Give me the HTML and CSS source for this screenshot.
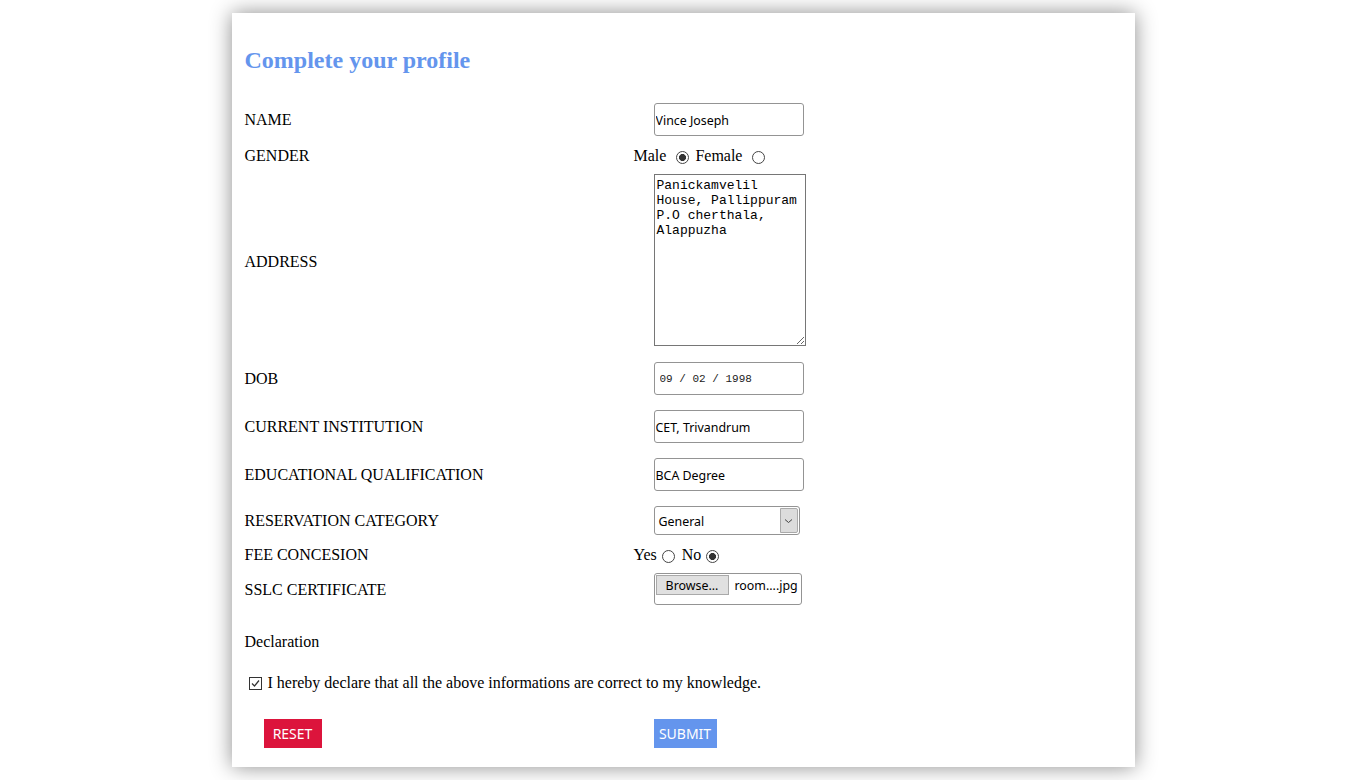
FILE: index.html
```html
<!DOCTYPE html>
<html lang="en">
<head>
<meta charset="utf-8">
<title>Complete your profile</title>
<link rel="stylesheet" href="styles.css">
</head>
<body>
<div class="card">
  <h2 class="title">Complete your profile</h2>
  <form class="form">
    <div class="row">
      <span class="label">NAME</span>
      <div class="value"><input class="text" type="text" value="Vince Joseph"></div>
    </div>
    <div class="row tall">
      <span class="label">GENDER</span>
      <div class="value choice">
        <span>Male</span><input class="radio" type="radio" name="g" checked>
        <span>Female</span><input class="radio" type="radio" name="g">
      </div>
    </div>
    <div class="row">
      <span class="label low">ADDRESS</span>
      <div class="value"><textarea class="area" spellcheck="false">Panickamvelil House, Pallippuram P.O cherthala, Alappuzha</textarea></div>
    </div>
    <div class="row gap16">
      <span class="label">DOB</span>
      <div class="value"><input class="text date" type="text" value="09 / 02 / 1998"></div>
    </div>
    <div class="row gap15">
      <span class="label">CURRENT INSTITUTION</span>
      <div class="value"><input class="text" type="text" value="CET, Trivandrum"></div>
    </div>
    <div class="row gap15">
      <span class="label">EDUCATIONAL QUALIFICATION</span>
      <div class="value"><input class="text" type="text" value="BCA Degree"></div>
    </div>
    <div class="row gap15">
      <span class="label">RESERVATION CATEGORY</span>
      <div class="value">
        <div class="select">
          <span class="select-text">General</span>
          <span class="select-btn"><svg width="9" height="6" viewBox="0 0 9 6"><path d="M1 1.5 L4.5 4.5 L8 1.5" fill="none" stroke="#444" stroke-width="1"/></svg></span>
        </div>
      </div>
    </div>
    <div class="row tall">
      <span class="label">FEE CONCESION</span>
      <div class="value choice">
        <span>Yes</span><input class="radio fee" type="radio" name="f">
        <span>No</span><input class="radio fee" type="radio" name="f" checked>
      </div>
    </div>
    <div class="row">
      <span class="label low1">SSLC CERTIFICATE</span>
      <div class="value">
        <div class="file"><span class="browse">Browse...</span><span class="fname">room....jpg</span></div>
      </div>
    </div>
    <p class="decl">Declaration</p>
    <label class="agree">
      <span class="check"><svg width="13" height="13" viewBox="0 0 13 13"><rect x="0.5" y="0.5" width="12" height="12" fill="#fff" stroke="#333"/><path d="M3 6.5 L5.5 9 L10 3.5" fill="none" stroke="#333" stroke-width="1.2"/></svg></span>
      <span>I hereby declare that all the above informations are correct to my knowledge.</span>
    </label>
    <div class="actions">
      <div class="act-left"><button type="reset" class="btn reset">RESET</button></div>
      <div class="act-right"><button type="button" class="btn submit">SUBMIT</button></div>
    </div>
  </form>
</div>
</body>
</html>
```
FILE: styles.css
```css
html, body {
  margin: 0;
  padding: 0;
  background: #fff;
}
body {
  font-family: "Liberation Serif", "Times New Roman", serif;
  font-size: 16px;
  color: #000;
  padding-top: 13px;
  padding-bottom: 13px;
}
.card {
  width: 903px;
  margin: 0 auto;
  box-sizing: border-box;
  padding: 33px 13px 19px 13px;
  background: #fff;
  box-shadow: 0 0 20px rgba(0, 0, 0, 0.45);
}
.title {
  margin: 0 0 29px 0;
  font-size: 24px;
  line-height: 28px;
  font-weight: bold;
  color: #6495ED;
}
.form {
  margin: 0;
}
.row {
  display: flex;
  align-items: center;
}
.row.tall {
  box-sizing: border-box;
  height: 38px;
  padding-top: 2px;
}
.row.gap15 { margin-top: 15px; }
.row.gap16 { margin-top: 16px; }
.label {
  width: 389px;
  flex: none;
  line-height: 18px;
}
.label.low {
  padding-top: 3px;
}
.label.low1 {
  padding-top: 2px;
}
.value {
  display: flex;
  align-items: center;
}
.value > .text,
.value > .area,
.value > .select,
.value > .file {
  margin-left: 20px;
}
.text {
  box-sizing: border-box;
  width: 150px;
  height: 33px;
  padding: 1px 1px 0 1px;
  border: 1px solid #949494;
  border-radius: 3px;
  font-family: "Noto Sans", "Open Sans", sans-serif;
  font-size: 12.4px;
  color: #000;
  background: #fff;
  outline: none;
}
.text.date {
  padding-left: 5px;
  font-family: "Liberation Mono", "DejaVu Sans Mono", monospace;
  font-size: 11px;
  color: #222;
}
.area {
  box-sizing: border-box;
  width: 152px;
  height: 172px;
  padding: 3px 2px;
  border: 1px solid #767676;
  border-radius: 0;
  font-family: "Liberation Mono", "Courier New", monospace;
  font-size: 13px;
  line-height: 15px;
  color: #000;
  resize: both;
  outline: none;
}
.choice {
  font-size: 16px;
  line-height: 18px;
}
.radio {
  appearance: none;
  -webkit-appearance: none;
  box-sizing: border-box;
  width: 13px;
  height: 13px;
  margin: 2px 6px 0 10px;
  border: 1px solid #444;
  border-radius: 50%;
  background: #fff;
}
.radio.fee {
  margin: 2px 7px 0 5px;
}
.radio:checked {
  background: radial-gradient(circle, #333 0, #333 3.2px, #fff 3.8px);
}
.select {
  box-sizing: border-box;
  width: 146px;
  height: 29px;
  display: flex;
  align-items: stretch;
  border: 1px solid #949494;
  border-radius: 3px;
  font-family: "Noto Sans", "Open Sans", sans-serif;
  font-size: 12.4px;
  overflow: hidden;
}
.select-text {
  flex: 1;
  display: flex;
  align-items: center;
  padding-left: 4px;
  padding-top: 1px;
}
.select-btn {
  width: 16px;
  margin: 1px;
  display: flex;
  align-items: center;
  justify-content: center;
  background: #dcdcdc;
  border: 1px solid #aaa;
  border-radius: 0 2px 2px 0;
}
.file {
  box-sizing: border-box;
  width: 148px;
  height: 32px;
  display: flex;
  align-items: flex-start;
  padding: 1px;
  border: 1px solid #949494;
  border-radius: 3px;
  font-family: "Noto Sans", "Open Sans", sans-serif;
  font-size: 12.4px;
}
.browse {
  box-sizing: border-box;
  width: 73px;
  height: 20px;
  display: flex;
  align-items: center;
  justify-content: center;
  background: #e0e0e0;
  border: 1px solid #a9a9a9;
}
.fname {
  margin-left: 6px;
  margin-top: 1px;
  line-height: 20px;
}
.decl {
  margin: 28px 0 0 0;
  line-height: 18px;
}
.agree {
  display: flex;
  align-items: center;
  margin: 23px 0 0 4px;
  line-height: 18px;
}
.check {
  display: flex;
  width: 13px;
  height: 13px;
  margin-right: 6px;
}
.actions {
  display: flex;
  margin-top: 27px;
}
.act-left {
  width: 389px;
  flex: none;
}
.btn {
  height: 29px;
  border: none;
  border-radius: 0;
  color: #fff;
  font-family: "Noto Sans", "Open Sans", sans-serif;
  font-size: 14px;
  padding: 0;
  cursor: pointer;
}
.reset {
  width: 58px;
  margin-left: 19px;
  background: #DC143C;
}
.submit {
  width: 63px;
  margin-left: 20px;
  background: #6495ED;
}
```
